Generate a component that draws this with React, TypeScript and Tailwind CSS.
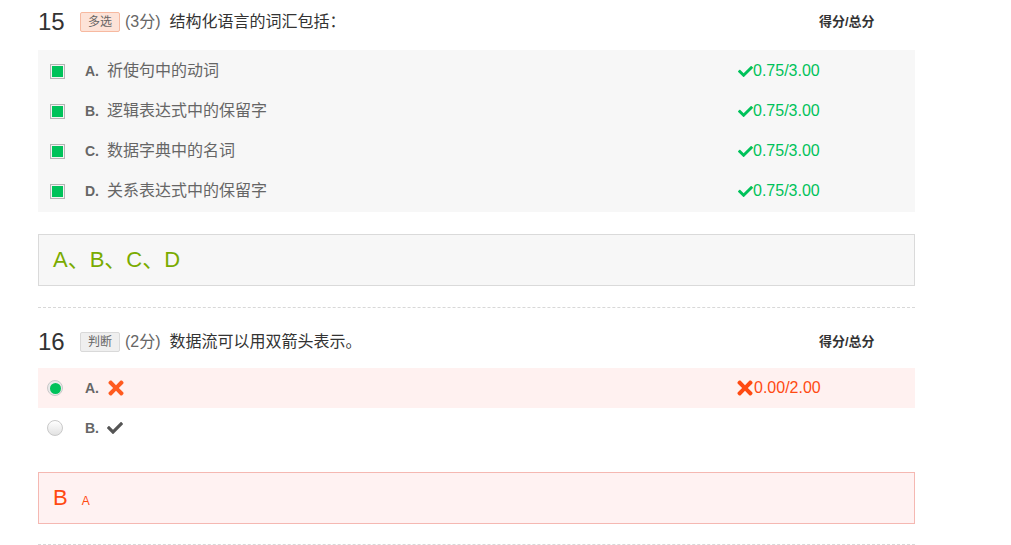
import React from "react";
import { FaCheck, FaTimes } from "react-icons/fa";

const FONT = { fontFamily: '"Liberation Sans", Arial, "Noto Sans CJK SC", sans-serif' };

function Checkbox() {
  return (
    <span className="inline-flex h-[15px] w-[15px] items-center justify-center border border-[#b5b5b5] bg-[#f3f3f3] p-[1px]">
      <span className="h-full w-full bg-[#00c25a]" />
    </span>
  );
}

function Radio({ on }: { on: boolean }) {
  return on ? (
    <span className="inline-flex h-[16px] w-[16px] items-center justify-center rounded-full border border-[#c9c9c9] bg-[#eaeaea]">
      <span className="h-[11px] w-[11px] rounded-full bg-[#00c25a]" />
    </span>
  ) : (
    <span className="inline-block h-[16px] w-[16px] rounded-full border border-[#c9c9c9] bg-gradient-to-b from-white to-[#e2e2e2]" />
  );
}

function Header({ no, tag, tagCls, score, title }: { no: string; tag: string; tagCls: string; score: string; title: string }) {
  return (
    <div className="flex h-[44px] items-center">
      <span className="w-[42px] text-[24px] leading-none text-[#333]">{no}</span>
      <span className={`inline-flex h-[20px] items-center rounded-[2px] border px-[7px] text-[12px] text-[#666] ${tagCls}`}>{tag}</span>
      <span className="ml-[5px] text-[16px] text-[#666]">({score})</span>
      <span className="ml-[9px] flex-1 text-[16px] text-[#333]">{title}</span>
      <span className="w-[96px] text-[13px] font-bold text-[#333]">得分/总分</span>
    </div>
  );
}

export default function App() {
  const opts = [
    ["A.", "祈使句中的动词"],
    ["B.", "逻辑表达式中的保留字"],
    ["C.", "数据字典中的名词"],
    ["D.", "关系表达式中的保留字"],
  ];
  return (
    <div className="min-h-[545px] w-[1011px] bg-white" style={FONT}>
      <div className="ml-[38px] w-[877px]">
        {/* Q15 */}
        <Header no="15" tag="多选" tagCls="border-[#f7b9a0] bg-[#fde3d8]" score="3分" title="结构化语言的词汇包括：" />
        <div className="mt-[6px] bg-[#f7f7f7] py-[1px]">
          {opts.map(([k, t]) => (
            <div key={k} className="flex h-[40px] items-center">
              <span className="ml-[12px] flex w-[35px] items-center"><Checkbox /></span>
              <span className="w-[22px] text-[14px] font-bold text-[#666]">{k}</span>
              <span className="flex-1 text-[16px] text-[#666]">{t}</span>
              <span className="flex w-[177px] items-center text-[16px] text-[#00c25a]">
                <FaCheck className="h-[15px] w-[15px]" />
                <span>0.75/3.00</span>
              </span>
            </div>
          ))}
        </div>
        <div className="mt-[22px] flex h-[52px] items-center border border-[#dadada] bg-[#f7f7f7] pb-[2px] pl-[14px] text-[22px] text-[#7aab00]">
          A、B、C、D
        </div>
        <div className="mt-[21px] border-t border-dashed border-[#d8d8d8]" />

        {/* Q16 */}
        <div className="mt-[12px]">
          <Header no="16" tag="判断" tagCls="border-[#d9d9d9] bg-[#efefef]" score="2分" title="数据流可以用双箭头表示。" />
        </div>
        <div className="mt-[4px]">
          <div className="flex h-[40px] items-center bg-[#fff1f0]">
            <span className="ml-[9px] flex w-[38px] items-center"><Radio on /></span>
            <span className="w-[22px] text-[14px] font-bold text-[#666]">A.</span>
            <span className="-ml-[1px] flex flex-1 items-center text-[#ff5a1f]"><FaTimes className="h-[22px] w-[20px]" /></span>
            <span className="-ml-[2px] flex w-[179px] items-center text-[16px] text-[#ff4a12]">
              <FaTimes className="h-[22px] w-[18px]" />
              <span>0.00/2.00</span>
            </span>
          </div>
          <div className="flex h-[40px] items-center">
            <span className="ml-[9px] flex w-[38px] items-center"><Radio on={false} /></span>
            <span className="w-[22px] text-[14px] font-bold text-[#666]">B.</span>
            <span className="flex flex-1 items-center text-[#555]"><FaCheck className="h-[16px] w-[16px]" /></span>
          </div>
        </div>
        <div className="mt-[24px] flex h-[52px] items-baseline border border-[#f5b8b2] bg-[#fff2f2] pl-[14px] pt-[8px] text-[#ff4a12]">
          <span className="text-[22px]">B</span>
          <span className="ml-[14px] text-[12px]">A</span>
        </div>
        <div className="mt-[20px] border-t border-dashed border-[#d8d8d8]" />
      </div>
    </div>
  );
}
